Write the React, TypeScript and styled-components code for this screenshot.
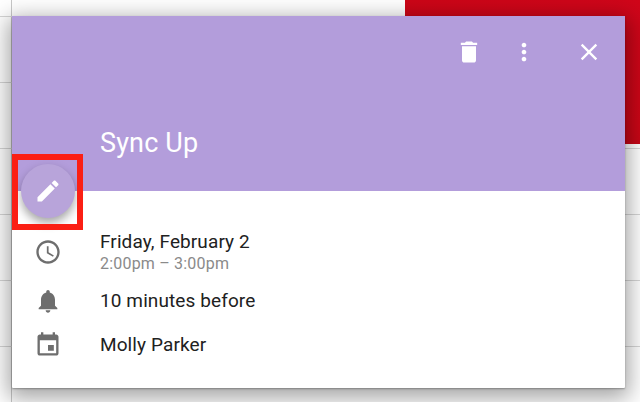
import React from "react";
import styled, { createGlobalStyle } from "styled-components";

const GlobalStyle = createGlobalStyle`
  html, body {
    margin: 0;
    padding: 0;
    background: #fff;
  }
  body {
    font-family: Roboto, "Liberation Sans", sans-serif;
  }
`;

const paths = {
  trash: "M6 19c0 1.1.9 2 2 2h8c1.1 0 2-.9 2-2V7H6v12zM19 4h-3.5l-1-1h-5l-1 1H5v2h14V4z",
  more: "M12 8c1.1 0 2-.9 2-2s-.9-2-2-2-2 .9-2 2 .9 2 2 2zm0 2c-1.1 0-2 .9-2 2s.9 2 2 2 2-.9 2-2-.9-2-2-2zm0 6c-1.1 0-2 .9-2 2s.9 2 2 2 2-.9 2-2-.9-2-2-2z",
  close: "M19 6.41L17.59 5 12 10.59 6.41 5 5 6.41 10.59 12 5 17.59 6.41 19 12 13.41 17.59 19 19 17.59 13.41 12z",
  edit: "M3 17.25V21h3.75L17.81 9.94l-3.75-3.75L3 17.25zM20.71 7.04c.39-.39.39-1.02 0-1.41l-2.34-2.34c-.39-.39-1.02-.39-1.41 0l-1.83 1.83 3.75 3.75 1.83-1.83z",
  clock: "M11.99 2C6.47 2 2 6.48 2 12s4.47 10 9.99 10C17.52 22 22 17.52 22 12S17.52 2 11.99 2zM12 20c-4.42 0-8-3.58-8-8s3.58-8 8-8 8 3.58 8 8-3.58 8-8 8zm.5-13H11v6l5.25 3.15.75-1.23-4.5-2.67z",
  bell: "M12 22c1.1 0 2-.9 2-2h-4c0 1.1.89 2 2 2zm6-6v-5c0-3.07-1.64-5.64-4.5-6.32V4c0-.83-.67-1.5-1.5-1.5s-1.5.67-1.5 1.5v.68C7.63 5.36 6 7.92 6 11v5l-2 2v1h16v-1l-2-2z",
  event: "M17 12h-5v5h5v-5zM16 1v2H8V1H6v2H5c-1.11 0-1.99.9-1.99 2L3 19c0 1.1.89 2 2 2h14c1.1 0 2-.9 2-2V5c0-1.1-.9-2-2-2h-1V1h-2zm3 18H5V8h14v11z",
};

const Icon: React.FC<{ d: string; size?: number }> = ({ d, size = 28 }) => (
  <svg width={size} height={size} viewBox="0 0 24 24" fill="currentColor">
    <path d={d} />
  </svg>
);

const App: React.FC = () => {
  return (
    <Calendar>
      <GlobalStyle />
      <RedEvent />
      <Card>
        <Header>
          <Actions>
            <ActionButton $space={27}>
              <Icon d={paths.trash} />
            </ActionButton>
            <ActionButton $space={37}>
              <Icon d={paths.more} />
            </ActionButton>
            <ActionButton>
              <Icon d={paths.close} />
            </ActionButton>
          </Actions>
          <Title>Sync Up</Title>
        </Header>
        <Body>
          <DateRow>
            <RowIcon>
              <Icon d={paths.clock} />
            </RowIcon>
            <div>
              <RowText>Friday, February 2</RowText>
              <SubText>2:00pm – 3:00pm</SubText>
            </div>
          </DateRow>
          <Row>
            <RowIcon>
              <Icon d={paths.bell} />
            </RowIcon>
            <RowText>10 minutes before</RowText>
          </Row>
          <Row>
            <RowIcon>
              <Icon d={paths.event} />
            </RowIcon>
            <RowText>Molly Parker</RowText>
          </Row>
        </Body>
        <Fab>
          <Icon d={paths.edit} size={28} />
        </Fab>
        <Highlight />
      </Card>
    </Calendar>
  );
};

export default App;

const Calendar = styled.div`
  position: relative;
  width: 640px;
  height: 402px;
  overflow: hidden;
  background-color: #fff;
  background-image: linear-gradient(#d6d6d6 0 1px, transparent 1px),
    linear-gradient(90deg, #c8c8c8 0 1px, transparent 1px);
  background-size: 100% 66px, 100% 100%;
  background-position: 0 16px, 11px 0;
  background-repeat: repeat-y, no-repeat;
`;

const RedEvent = styled.div`
  position: absolute;
  top: 0;
  right: 0;
  width: 235px;
  height: 144px;
  background: linear-gradient(200deg, #d0061a 0%, #cb0616 55%, #ae0716 100%);
`;

const Card = styled.section`
  position: absolute;
  top: 16px;
  left: 12px;
  width: 613px;
  height: 372px;
  background: #fff;
  border-radius: 1px;
  box-shadow: 0 6px 22px 4px rgba(0, 0, 0, 0.36), 0 1px 2px rgba(0, 0, 0, 0.3);
`;

const Header = styled.header`
  display: flex;
  flex-direction: column;
  justify-content: space-between;
  height: 175px;
  padding: 22px 22px 32px 88px;
  box-sizing: border-box;
  background: #b39ddb;
  color: #fff;
`;

const Actions = styled.div`
  display: flex;
  justify-content: flex-end;
`;

const ActionButton = styled.div<{ $space?: number }>`
  display: flex;
  width: 28px;
  height: 28px;
  margin-right: ${(p) => p.$space ?? 0}px;
`;

const Title = styled.h1`
  margin: 0;
  font-size: 27px;
  font-weight: 400;
  line-height: 32px;
  letter-spacing: 0.15px;
`;

const Body = styled.div`
  display: flex;
  flex-direction: column;
  padding-top: 39px;
`;

const Row = styled.div`
  display: grid;
  grid-template-columns: 88px 1fr;
  align-items: center;
  height: 44px;
`;

const DateRow = styled(Row)`
  margin-bottom: 5px;
`;

const RowIcon = styled.div`
  display: flex;
  justify-content: center;
  width: 72px;
  color: #6e6e6e;
`;

const RowText = styled.div`
  font-size: 19px;
  line-height: 24px;
  letter-spacing: 0.1px;
  color: #212121;
`;

const SubText = styled.div`
  font-size: 16px;
  line-height: 20px;
  letter-spacing: 0.2px;
  color: #8a8a8a;
`;

const Fab = styled.div`
  position: absolute;
  top: 148px;
  left: 9px;
  display: flex;
  align-items: center;
  justify-content: center;
  width: 54px;
  height: 54px;
  border-radius: 50%;
  background: #b8a4da;
  color: #fff;
  box-shadow: 0 5px 10px rgba(0, 0, 0, 0.35);
`;

const Highlight = styled.div`
  position: absolute;
  top: 138px;
  left: 0;
  width: 71px;
  height: 76px;
  box-sizing: border-box;
  border: 6px solid #fb1f14;
  pointer-events: none;
`;
